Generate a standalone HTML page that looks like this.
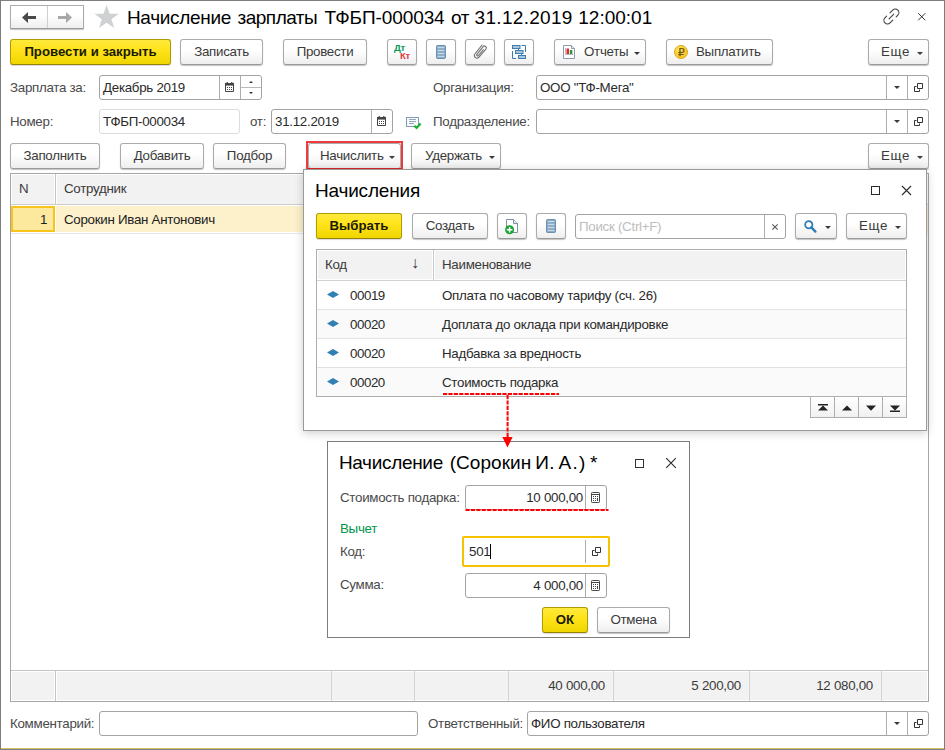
<!DOCTYPE html>
<html lang="ru">
<head>
<meta charset="utf-8">
<title>Начисление зарплаты</title>
<style>
*{box-sizing:border-box;margin:0;padding:0}
html,body{width:945px;height:750px;overflow:hidden;background:#fff}
body{font-family:"Liberation Sans",sans-serif;font-size:13px;color:#3a3a3a;position:relative}
.abs{position:absolute}
.btn{position:absolute;height:26px;border:1px solid #ababab;border-bottom-color:#9a9a9a;border-radius:3px;background:linear-gradient(#ffffff 0%,#ffffff 42%,#eeeeee 100%);box-shadow:0 1px 1px rgba(0,0,0,.24);font-size:13.33px;letter-spacing:-.28px;color:#3a3a3a;text-align:center;line-height:24px;white-space:nowrap}
.btn.y{background:linear-gradient(#ffea3c 0%,#ffe31c 40%,#f0d600 100%);border-color:#b09a00;border-bottom-color:#968200;box-shadow:0 1px 1px rgba(40,40,90,.18);font-weight:bold;color:#1a1a00;font-size:13.2px;letter-spacing:0}
.btn.l{text-align:left}
.lbl{position:absolute;font-size:13.33px;letter-spacing:-.28px;color:#4a4a4a;white-space:nowrap;line-height:15px}
.inp{position:absolute;height:25px;border:1px solid #a3a3a3;border-radius:3px;background:#fff;font-size:13.33px;letter-spacing:-.28px;color:#2a2a2a;line-height:23px;padding-left:3px;white-space:nowrap;overflow:hidden}
.inp.ro{border-color:#dcdcdc}
.inp.r{text-align:right}
.sep{position:absolute;top:0;bottom:0;width:1px;background:#adadad}
.arr{position:absolute;width:0;height:0;border-left:3px solid transparent;border-right:3px solid transparent;border-top:3px solid #3a3a3a}
.title{position:absolute;white-space:nowrap;color:#111;line-height:24px}
.tbl{position:absolute;border:1px solid #a8a8a8;background:#fff;overflow:hidden}
.vl{position:absolute;top:0;bottom:0;width:1px;background:#d4d4d4}
.hl{position:absolute;left:0;right:0;height:1px;background:#e1e1e1}
.cell{position:absolute;font-size:13.33px;letter-spacing:-.28px;white-space:nowrap;line-height:15px;color:#3a3a3a}
.pop{position:absolute;background:#fff;border:1px solid #a3a3a3}
svg{position:absolute;overflow:visible}
</style>
</head>
<body>
<!-- title row -->
<div class="btn" style="left:10px;top:5px;width:74px;height:24px;border-radius:1px"><div class="sep" style="left:36px;background:#cfcfcf"></div>
<svg style="left:11px;top:6px" width="15" height="11" viewBox="0 0 15 11"><path d="M0 5.5 L6 0 V4 H14 V7 H6 V11 Z" fill="#4a4a4a"/></svg>
<svg style="left:47px;top:6px" width="15" height="11" viewBox="0 0 15 11"><path d="M14 5.5 L8 0 V4 H0 V7 H8 V11 Z" fill="#a8a8a8"/></svg>
</div>
<svg style="left:94.3px;top:5.4px" width="25.2" height="24.2" viewBox="0 0 24 23"><path d="M12 0 L14.9 8.4 H23.6 L16.6 13.6 L19.3 22 L12 16.8 L4.7 22 L7.4 13.6 L0.4 8.4 H9.1 Z" fill="#cfd1d3"/></svg>
<div class="title" style="left:0;top:6px;font-size:19px;color:#000;width:700px;height:24px"><span style="position:absolute;left:126.9px;top:0;letter-spacing:-0.31px">Начисление </span><span style="position:absolute;left:237.5px;top:0;letter-spacing:-0.5px">зарплаты </span><span style="position:absolute;left:324.4px;top:0;letter-spacing:-0.1px">ТФБП-000034 </span><span style="position:absolute;left:450.9px;top:0;letter-spacing:-0.3px">от </span><span style="position:absolute;left:474.6px;top:0;letter-spacing:0.3px">31.12.2019 </span><span style="position:absolute;left:578.3px;top:0;letter-spacing:0px">12:00:01</span></div>
<svg style="left:0;top:0" width="945" height="40" viewBox="0 0 945 40"><g transform="translate(891.4 16.5) rotate(-45)" fill="none" stroke="#444" stroke-width="1.15" stroke-linecap="round"><path d="M-3.2 -3.6 H-5.5 A3.6 3.6 0 0 0 -5.5 3.6 H-1.6"/><path d="M3.2 3.6 H5.5 A3.6 3.6 0 0 0 5.5 -3.6 H1.6"/><path d="M-3.3 0 H3.3"/></g><path d="M918.2 13.2 L925.3 20.3 M925.3 13.2 L918.2 20.3" stroke="#333" stroke-width="1" fill="none"/></svg>

<!-- toolbar 1 -->
<div class="btn y" style="left:10px;top:39px;width:161px">Провести и закрыть</div>
<div class="btn" style="left:180px;top:39px;width:83px">Записать</div>
<div class="btn" style="left:283px;top:39px;width:84px">Провести</div>
<div class="btn" style="left:387px;top:39px;width:30px"><div class="abs" style="left:6px;top:4px;font-size:9px;line-height:9px;font-weight:bold;color:#0a9a50;transform:scaleX(1.06);transform-origin:0 0">Дт</div><div class="abs" style="left:12px;top:12px;font-size:9px;line-height:9px;font-weight:bold;color:#e23a42;transform:scaleX(1.06);transform-origin:0 0">Кт</div></div>
<div class="btn" style="left:426px;top:39px;width:30px"><svg style="left:9px;top:5px" width="10" height="14" viewBox="0 0 10 14"><rect x="0.5" y="0.5" width="9" height="13" rx="1" fill="#7d9fbd" stroke="#6c8fb0"/><path d="M1.5 2.5 H8.5 M1.5 5.5 H8.5 M1.5 8.5 H8.5 M1.5 11.5 H8.5" stroke="#c6d9e9" stroke-width="1.5"/></svg></div>
<div class="btn" style="left:465px;top:39px;width:30px"><svg style="left:8px;top:4px" width="13" height="14" viewBox="0 0 13 14"><path d="M8 1 L0.9 10 A2.6 2.6 0 0 0 5 13.2 L11.9 5.2 A1.9 1.9 0 0 0 8.9 2.8 L2.9 10.3 A1 1 0 0 0 4.5 11.5 L9.3 5.6" fill="none" stroke="#737373" stroke-width="1.15" stroke-linecap="round"/></svg></div>
<div class="btn" style="left:504px;top:39px;width:30px"><svg style="left:7px;top:5px" width="14" height="14" viewBox="0 0 14 14"><g fill="#a9c6df" stroke="#3f7db0" stroke-width="1"><rect x="0.5" y="0.5" width="7.5" height="3"/><rect x="3.5" y="5.5" width="7.5" height="3"/><rect x="6.5" y="10.5" width="7" height="3"/></g><path d="M9.5 0.5 H13.5 V7 M0.5 6 V13.5 H4 M6.5 3.5 V5.5 M9.5 8.5 V10.5" fill="none" stroke="#3f7db0" stroke-width="1"/></svg></div>
<div class="btn l" style="left:554px;top:39px;width:92px;padding-left:29px"><svg style="left:8px;top:5px" width="12" height="14" viewBox="0 0 12 14"><path d="M0.5 0.5 H8.5 L11.5 3.5 V13.5 H0.5 Z" fill="#fff" stroke="#8a9db0"/><path d="M8.5 0.5 V3.5 H11.5" fill="#dfe6ee" stroke="#8a9db0"/><rect x="3.5" y="3.5" width="2.5" height="5.5" fill="#e8262c"/><rect x="6.8" y="5" width="2.5" height="4" fill="#1e9a3a"/><path d="M2.5 3 V9.5 H10" stroke="#99a" stroke-width="0.7" fill="none"/></svg>Отчеты<div class="arr" style="left:79px;top:12px"></div></div>
<div class="btn l" style="left:666px;top:39px;width:107px;padding-left:29px"><svg style="left:7px;top:5px" width="14" height="14" viewBox="0 0 14 14"><defs><radialGradient id="cg" cx="40%" cy="35%" r="70%"><stop offset="0" stop-color="#ffea62"/><stop offset="1" stop-color="#f6be1c"/></radialGradient></defs><circle cx="7" cy="7" r="6.5" fill="url(#cg)" stroke="#e3a512"/><text x="7.1" y="10.8" font-family="Liberation Sans,DejaVu Sans,sans-serif" font-size="10.5" text-anchor="middle" fill="#6e5210" stroke="#6e5210" stroke-width=".25">₽</text></svg>Выплатить</div>
<div class="btn l" style="left:868px;top:39px;width:61px;padding-left:12px;letter-spacing:.6px">Еще<div class="arr" style="left:48px;top:12px"></div></div>

<!-- row 2 -->
<div class="lbl" style="left:10px;top:80px">Зарплата за:</div>
<div class="inp" style="left:99px;top:75px;width:163px">Декабрь 2019<div class="sep" style="left:119px"></div><svg style="left:125px;top:6px" width="9" height="10" viewBox="0 0 9 10"><path d="M0.5 1.5 H8.5 V9.5 H0.5 Z" fill="#fff" stroke="#444"/><rect x="0" y="1" width="9" height="2.6" fill="#444"/><rect x="1.6" y="0" width="1.2" height="2" fill="#444"/><rect x="6.2" y="0" width="1.2" height="2" fill="#444"/><g fill="#444"><rect x="2" y="5" width="1" height="1"/><rect x="4" y="5" width="1" height="1"/><rect x="6" y="5" width="1" height="1"/><rect x="2" y="7" width="1" height="1"/><rect x="4" y="7" width="1" height="1"/><rect x="6" y="7" width="1" height="1"/></g></svg><div class="sep" style="left:140px"></div><div class="abs" style="left:141px;right:0;top:11px;height:1px;background:#b9b9b9"></div><svg style="left:149px;top:5px" width="4" height="2" viewBox="0 0 4 2"><path d="M0 2 L2 0 L4 2 Z" fill="#333"/></svg><svg style="left:149px;top:16px" width="4" height="2" viewBox="0 0 4 2"><path d="M0 0 L2 2 L4 0 Z" fill="#333"/></svg></div>
<div class="lbl" style="left:433px;top:80px">Организация:</div>
<div class="inp" style="left:536px;top:75px;width:393px">ООО "ТФ-Мега"<div class="sep" style="left:349px"></div><div class="sep" style="left:370px"></div><div class="arr" style="left:357px;top:10px"></div><svg style="left:377px;top:7px" width="9" height="9" viewBox="0 0 9 9"><path d="M3.5 0.5 H8.5 V5.5 H3.5 Z M2.5 3.5 H0.5 V8.5 H5.5 V6.5" fill="none" stroke="#333" stroke-width="1"/></svg></div>

<!-- row 3 -->
<div class="lbl" style="left:10px;top:114px">Номер:</div>
<div class="inp ro" style="left:99px;top:109px;width:141px">ТФБП-000034</div>
<div class="lbl" style="left:250px;top:114px">от:</div>
<div class="inp" style="left:271px;top:109px;width:122px">31.12.2019<div class="sep" style="left:99px"></div><svg style="left:105px;top:6px" width="9" height="10" viewBox="0 0 9 10"><path d="M0.5 1.5 H8.5 V9.5 H0.5 Z" fill="#fff" stroke="#444"/><rect x="0" y="1" width="9" height="2.6" fill="#444"/><rect x="1.6" y="0" width="1.2" height="2" fill="#444"/><rect x="6.2" y="0" width="1.2" height="2" fill="#444"/><g fill="#444"><rect x="2" y="5" width="1" height="1"/><rect x="4" y="5" width="1" height="1"/><rect x="6" y="5" width="1" height="1"/><rect x="2" y="7" width="1" height="1"/><rect x="4" y="7" width="1" height="1"/><rect x="6" y="7" width="1" height="1"/></g></svg></div>
<svg style="left:406px;top:117px" width="16" height="13" viewBox="0 0 16 13"><rect x="0.5" y="0.5" width="12" height="9" fill="#fafcfd" stroke="#7f9ab5"/><path d="M3 2.5 H10 M3 4.5 H10 M3 6.5 H8" stroke="#8fa6bd" stroke-width="1"/><path d="M8.3 8.8 L10.6 11 L14.6 6.6" fill="none" stroke="#19b02e" stroke-width="2.2"/></svg>
<div class="lbl" style="left:433px;top:114px">Подразделение:</div>
<div class="inp" style="left:536px;top:109px;width:393px"><div class="sep" style="left:349px"></div><div class="sep" style="left:370px"></div><div class="arr" style="left:357px;top:10px"></div><svg style="left:377px;top:7px" width="9" height="9" viewBox="0 0 9 9"><path d="M3.5 0.5 H8.5 V5.5 H3.5 Z M2.5 3.5 H0.5 V8.5 H5.5 V6.5" fill="none" stroke="#333" stroke-width="1"/></svg></div>

<!-- toolbar 2 -->
<div class="btn" style="left:10px;top:143px;width:90px">Заполнить</div>
<div class="btn" style="left:120px;top:143px;width:84px">Добавить</div>
<div class="btn" style="left:213px;top:143px;width:73px">Подбор</div>
<div class="btn l" style="left:308px;top:143px;width:93px;padding-left:11px">Начислить<div class="arr" style="left:80px;top:12px"></div></div>
<div class="abs" style="left:306px;top:141px;width:97px;height:29px;border:2px solid #ee3c3e;border-bottom-color:#dc2626;border-radius:1px"></div>
<div class="btn l" style="left:411px;top:143px;width:90px;padding-left:13px">Удержать<div class="arr" style="left:77px;top:12px"></div></div>
<div class="btn l" style="left:868px;top:143px;width:61px;padding-left:12px;letter-spacing:.6px">Еще<div class="arr" style="left:48px;top:12px"></div></div>

<!-- table -->
<div class="tbl" style="left:10px;top:173px;width:919px;height:529px;border-color:#a6a6a6">
 <div class="abs" style="left:1px;top:1px;right:1px;height:29px;background:#f2f2f2"></div>
 <div class="abs" style="left:0;top:30px;right:0;height:1px;background:#cdcdcd"></div>
 <div class="abs" style="left:43px;top:0;width:3px;height:30px;background:#fff"></div>
 <div class="vl" style="left:44px;top:0;height:30px;background:#c6c6c6"></div>
 <div class="abs" style="left:45px;top:32px;right:0;height:26px;background:#fdf1cb"></div>
 <div class="abs" style="left:0;top:32px;width:44px;height:26px;border:2px solid #f8c31c;background:#fde99e"></div>
 <div class="abs" style="left:0;top:59px;right:0;height:1px;background:#e6e6e6"></div>
 <div class="cell" style="left:8px;top:7px">N</div>
 <div class="cell" style="left:53px;top:7px">Сотрудник</div>
 <div class="cell" style="left:29px;top:38px;color:#222">1</div>
 <div class="cell" style="left:53px;top:38px;color:#222">Сорокин Иван Антонович</div>
 <div class="abs" style="left:0;right:0;bottom:0;height:31px;background:#fff;border-top:1px solid #c4c4c4">
  <div class="abs" style="left:1px;top:1px;right:1px;bottom:1px;background:#f2f2f2"></div>
  <div class="abs" style="left:43px;top:0;width:3px;bottom:0;background:#fff"></div><div class="vl" style="left:44px;background:#c6c6c6"></div>
  <div class="vl" style="left:320px"></div><div class="vl" style="left:403px"></div><div class="vl" style="left:497px"></div><div class="vl" style="left:602px"></div><div class="vl" style="left:738px"></div><div class="vl" style="left:870px"></div>
  <div class="cell" style="right:323px;top:7px">40 000,00</div>
  <div class="cell" style="right:187px;top:7px">5 200,00</div>
  <div class="cell" style="right:55px;top:7px">12 080,00</div>
 </div>
</div>

<!-- bottom row -->
<div class="lbl" style="left:10px;top:716px">Комментарий:</div>
<div class="inp" style="left:99px;top:711px;width:319px"></div>
<div class="lbl" style="left:428px;top:716px">Ответственный:</div>
<div class="inp" style="left:527px;top:711px;width:402px">ФИО пользователя<div class="sep" style="left:358px"></div><div class="sep" style="left:379px"></div><div class="arr" style="left:366px;top:10px"></div><svg style="left:386px;top:7px" width="9" height="9" viewBox="0 0 9 9"><path d="M3.5 0.5 H8.5 V5.5 H3.5 Z M2.5 3.5 H0.5 V8.5 H5.5 V6.5" fill="none" stroke="#333" stroke-width="1"/></svg></div>

<!-- popup 1 -->
<div class="pop" style="left:303px;top:169px;width:624px;height:262px;border-color:#9a9a9a;box-shadow:0 2px 9px rgba(0,0,0,.2)">
 <div class="title" style="left:11px;top:9px;font-size:19px;color:#000;letter-spacing:-.19px">Начисления</div>
 <div class="abs" style="left:567px;top:16px;width:9px;height:9px;border:1px solid #2a2a2a"></div>
 <svg style="left:598px;top:16px" width="9" height="9" viewBox="0 0 9 9"><path d="M0 0 L9 9 M9 0 L0 9" stroke="#2a2a2a" stroke-width="1.1" fill="none"/></svg>
 <div class="btn y" style="left:12px;top:43px;width:86px">Выбрать</div>
 <div class="btn" style="left:108px;top:43px;width:76px">Создать</div>
 <div class="btn" style="left:193px;top:43px;width:30px"><svg style="left:7px;top:5px" width="14" height="16" viewBox="0 0 14 16"><path d="M1.5 0.5 H8.5 L12.5 4.5 V13.5 H1.5 Z" fill="#fff" stroke="#7c8fa3"/><path d="M8.5 0.5 V4.5 H12.5" fill="#e8edf2" stroke="#7c8fa3"/><circle cx="4.6" cy="10.8" r="4.5" fill="#1aa334"/><path d="M4.6 8 V13.6 M1.8 10.8 H7.4" stroke="#fff" stroke-width="1.6"/></svg></div>
 <div class="btn" style="left:232px;top:43px;width:30px"><svg style="left:9px;top:5px" width="10" height="14" viewBox="0 0 10 14"><rect x="0.5" y="0.5" width="9" height="13" rx="1" fill="#7d9fbd" stroke="#6c8fb0"/><path d="M1.5 2.5 H8.5 M1.5 5.5 H8.5 M1.5 8.5 H8.5 M1.5 11.5 H8.5" stroke="#c6d9e9" stroke-width="1.5"/></svg></div>
 <div class="inp" style="left:271px;top:44px;width:211px;color:#bdbdbd">Поиск (Ctrl+F)<div class="sep" style="left:188px"></div><svg style="left:196px;top:9px" width="6" height="6" viewBox="0 0 6 6"><path d="M0.3 0.3 L5.7 5.7 M5.7 0.3 L0.3 5.7" stroke="#606060" stroke-width="1.2"/></svg></div>
 <div class="btn" style="left:491px;top:43px;width:42px"><svg style="left:8px;top:6px" width="13" height="13" viewBox="0 0 13 13"><circle cx="4.8" cy="4.8" r="3.6" fill="none" stroke="#2f7db4" stroke-width="1.8"/><path d="M7.4 7.4 L11.4 11.6" stroke="#2f7db4" stroke-width="2.4" stroke-linecap="round"/></svg><div class="arr" style="left:29px;top:12px"></div></div>
 <div class="btn l" style="left:542px;top:43px;width:61px;padding-left:12px;letter-spacing:.6px">Еще<div class="arr" style="left:48px;top:12px"></div></div>
 <div class="tbl" style="left:12px;top:79px;width:591px;height:148px;border-color:#adadad">
  <div class="abs" style="left:1px;top:1px;right:1px;height:28px;background:#f2f2f2"></div>
  <div class="abs" style="left:0;top:30px;right:0;height:1px;background:#d2d2d2"></div>
  <div class="abs" style="left:115px;top:0;width:3px;height:30px;background:#fff"></div>
  <div class="vl" style="left:116px;top:0;height:30px;background:#cacaca"></div>
  <div class="abs" style="left:0;right:0;top:60px;height:28px;background:#fafafa"></div>
  <div class="abs" style="left:0;right:0;top:118px;height:28px;background:#fafafa"></div>
  <div class="hl" style="top:59px"></div><div class="hl" style="top:88px"></div><div class="hl" style="top:117px"></div>
  <div class="cell" style="left:8px;top:7px">Код</div>
  <div class="cell" style="left:94px;top:5px;font-size:16px;line-height:16px;letter-spacing:0">↓</div>
  <div class="cell" style="left:125px;top:7px">Наименование</div>
  <svg style="left:10px;top:41px" width="12" height="7" viewBox="0 0 12 7"><path d="M0 3.5 L6 0 L12 3.5 L6 7 Z" fill="#327fb4"/></svg>
  <div class="cell" style="left:33px;top:38px;color:#2a2a2a;letter-spacing:-.45px">00019</div>
  <div class="cell" style="left:125px;top:38px;color:#2a2a2a">Оплата по часовому тарифу (сч. 26)</div>
  <svg style="left:10px;top:70px" width="12" height="7" viewBox="0 0 12 7"><path d="M0 3.5 L6 0 L12 3.5 L6 7 Z" fill="#327fb4"/></svg>
  <div class="cell" style="left:33px;top:67px;color:#2a2a2a;letter-spacing:-.45px">00020</div>
  <div class="cell" style="left:125px;top:67px;color:#2a2a2a">Доплата до оклада при командировке</div>
  <svg style="left:10px;top:99px" width="12" height="7" viewBox="0 0 12 7"><path d="M0 3.5 L6 0 L12 3.5 L6 7 Z" fill="#327fb4"/></svg>
  <div class="cell" style="left:33px;top:96px;color:#2a2a2a;letter-spacing:-.45px">00020</div>
  <div class="cell" style="left:125px;top:96px;color:#2a2a2a">Надбавка за вредность</div>
  <svg style="left:10px;top:128px" width="12" height="7" viewBox="0 0 12 7"><path d="M0 3.5 L6 0 L12 3.5 L6 7 Z" fill="#327fb4"/></svg>
  <div class="cell" style="left:33px;top:125px;color:#2a2a2a;letter-spacing:-.45px">00020</div>
  <div class="cell" style="left:125px;top:125px;color:#2a2a2a">Стоимость подарка</div>
 </div>
 <div class="abs" style="left:506px;top:226px;width:97px;height:22px;border:1px solid #b0b0b0;background:linear-gradient(#fff,#f1f1f1)">
  <div class="sep" style="left:23px"></div><div class="sep" style="left:47px"></div><div class="sep" style="left:71px"></div>
  <svg style="left:0;top:0" width="95" height="20" viewBox="0 0 95 20"><g fill="#222"><path d="M7 7 H17 V8.4 H7 Z M12 8.4 L17 13.6 H7 Z"/><path d="M36 8.4 L41 13.6 H31 Z"/><path d="M55 8.6 H65 L60 13.8 Z"/><path d="M79 8.6 H89 L84 13.6 Z M79 13.6 H89 V15 H79 Z"/></g></svg>
 </div>
</div>

<!-- red annotations -->
<svg style="left:0;top:0" width="945" height="750" viewBox="0 0 945 750">
 <path d="M443 394 H559" stroke="#ff0000" stroke-width="2" stroke-dasharray="4.2 1.2" fill="none"/>
 <path d="M507.6 395 V438" stroke="#ff0000" stroke-width="2" stroke-dasharray="4.2 1.2" fill="none"/>
</svg>
<!-- popup 2 -->
<div class="pop" style="left:327px;top:441px;width:363px;height:197px;border-color:#7c7c7c">
 <div class="title" style="left:0;top:9px;font-size:19px;color:#000;width:300px;height:24px"><span style="position:absolute;left:10.9px;top:0;letter-spacing:-0.32px">Начисление </span><span style="position:absolute;left:121.7px;top:0;letter-spacing:0.06px">(Сорокин </span><span style="position:absolute;left:207.3px;top:0;letter-spacing:0.4px">И. </span><span style="position:absolute;left:230.4px;top:0;letter-spacing:1.35px">А.) </span><span style="position:absolute;left:262.1px;top:0;letter-spacing:0px">*</span></div>
 <div class="abs" style="left:307px;top:17px;width:9px;height:9px;border:1px solid #333"></div>
 <svg style="left:338px;top:16px" width="10" height="10" viewBox="0 0 10 10"><path d="M0.2 0.2 L9.8 9.8 M9.8 0.2 L0.2 9.8" stroke="#2a2a2a" stroke-width="1.1" fill="none"/></svg>
 <div class="lbl" style="left:12px;top:48px">Стоимость подарка:</div>
 <div class="inp r" style="left:137px;top:43px;width:142px;padding-right:23px">10 000,00<div class="sep" style="left:119px"></div><svg style="left:125px;top:6px" width="9" height="11" viewBox="0 0 9 11"><rect x="0.5" y="0.5" width="8" height="10" rx="0.8" fill="#fff" stroke="#444"/><path d="M0.5 2.5 H8.5" stroke="#444" stroke-width="1"/><g fill="#444"><rect x="2" y="4" width="1" height="1"/><rect x="4" y="4" width="1" height="1"/><rect x="6" y="4" width="1" height="1"/><rect x="2" y="6" width="1" height="1"/><rect x="4" y="6" width="1" height="1"/><rect x="2" y="8" width="1" height="1"/><rect x="4" y="8" width="1" height="1"/><rect x="6" y="6" width="1" height="3"/></g></svg></div>
 <div class="lbl" style="left:12px;top:79px;color:#00964b">Вычет</div>
 <div class="lbl" style="left:12px;top:102px">Код:</div>
 <div class="inp" style="left:134px;top:94px;width:148px;height:31px;border:2px solid #f5c300;border-radius:2px;line-height:27px;padding-left:5px">501<span style="display:inline-block;width:1px;height:15px;background:#000;vertical-align:-3px"></span><div class="sep" style="left:121px;top:2px;bottom:2px"></div><svg style="left:128px;top:9px" width="9" height="9" viewBox="0 0 9 9"><path d="M3.5 0.5 H8.5 V5.5 H3.5 Z M2.5 3.5 H0.5 V8.5 H5.5 V6.5" fill="none" stroke="#333" stroke-width="1"/></svg></div>
 <div class="lbl" style="left:12px;top:135px">Сумма:</div>
 <div class="inp r" style="left:137px;top:131px;width:142px;padding-right:23px">4 000,00<div class="sep" style="left:119px"></div><svg style="left:125px;top:6px" width="9" height="11" viewBox="0 0 9 11"><rect x="0.5" y="0.5" width="8" height="10" rx="0.8" fill="#fff" stroke="#444"/><path d="M0.5 2.5 H8.5" stroke="#444" stroke-width="1"/><g fill="#444"><rect x="2" y="4" width="1" height="1"/><rect x="4" y="4" width="1" height="1"/><rect x="6" y="4" width="1" height="1"/><rect x="2" y="6" width="1" height="1"/><rect x="4" y="6" width="1" height="1"/><rect x="2" y="8" width="1" height="1"/><rect x="4" y="8" width="1" height="1"/><rect x="6" y="6" width="1" height="3"/></g></svg></div>
 <div class="btn y" style="left:214px;top:165px;width:46px">ОК</div>
 <div class="btn" style="left:269px;top:165px;width:73px">Отмена</div>
</div>
<svg style="left:0;top:0" width="945" height="750" viewBox="0 0 945 750">
 <path d="M502.4 437 H512.6 L507.5 447.4 Z" fill="#ff0000"/>
 <path d="M465.5 510 H608.5" stroke="#ff0000" stroke-width="2" stroke-dasharray="4.2 1.2" fill="none"/>
</svg>


<div class="abs" style="left:0;top:0;width:945px;height:1px;background:#7f7f7f"></div>
<div class="abs" style="left:0;top:0;width:1px;height:750px;background:#7d7d7d"></div>
<div class="abs" style="left:944px;top:0;width:1px;height:750px;background:#7d7d7d"></div>
<div class="abs" style="left:1px;top:748px;width:943px;height:1px;background:#d2bf5e"></div>
<div class="abs" style="left:0;top:749px;width:945px;height:1px;background:#7f7f88"></div>
</body>
</html>
